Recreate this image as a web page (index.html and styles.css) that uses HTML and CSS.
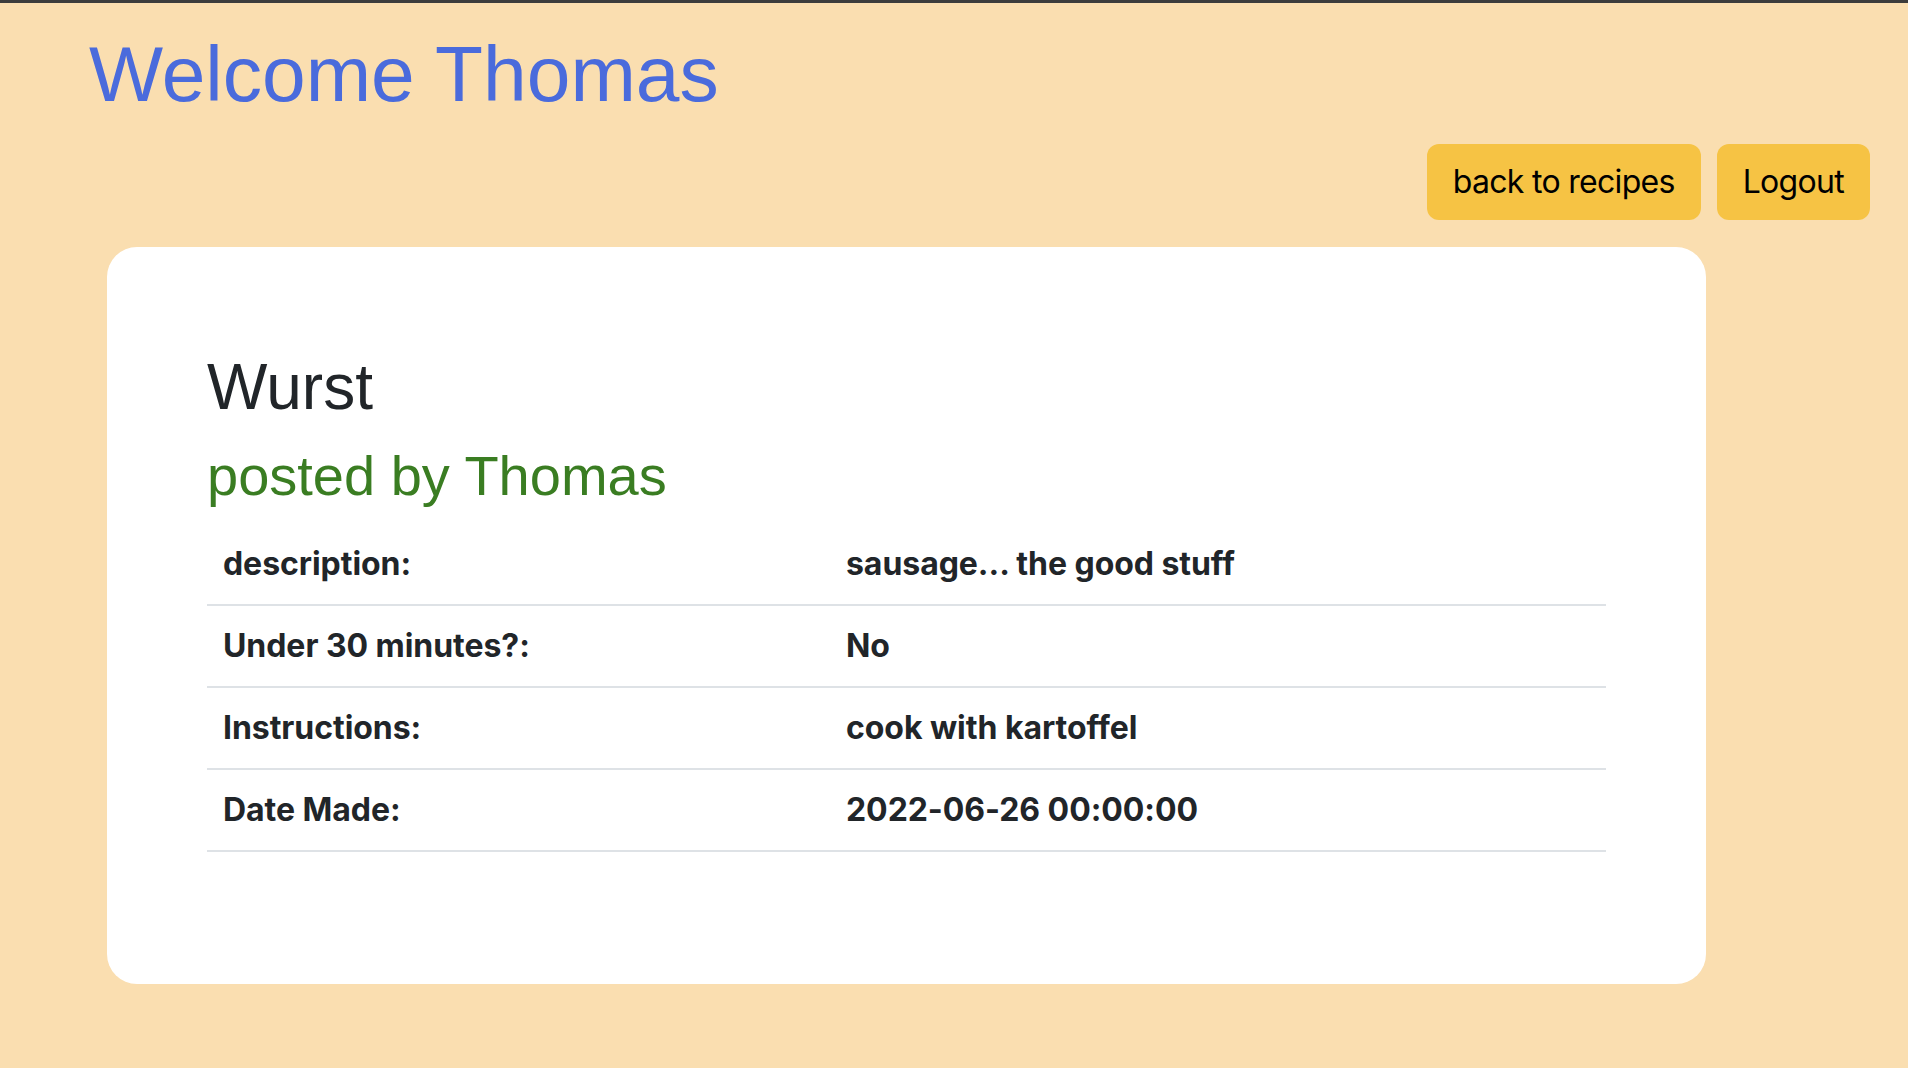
FILE: index.html
```html
<!DOCTYPE html>
<html lang="en">
<head>
<meta charset="utf-8">
<title>Wurst</title>
<link rel="stylesheet" href="styles.css">
</head>
<body>
<div class="topbar"></div>
<header class="header">
  <h1 class="welcome">Welcome Thomas</h1>
  <nav class="actions">
    <a class="btn" href="#">back to recipes</a>
    <a class="btn" href="#">Logout</a>
  </nav>
</header>
<main class="card">
  <h2 class="recipe-name">Wurst</h2>
  <h3 class="posted-by">posted by Thomas</h3>
  <table class="details">
    <tbody>
      <tr><th class="label">description:</th><td class="value">sausage... the good stuff</td></tr>
      <tr><th class="label">Under 30 minutes?:</th><td class="value">No</td></tr>
      <tr><th class="label">Instructions:</th><td class="value">cook with kartoffel</td></tr>
      <tr><th class="label">Date Made:</th><td class="value">2022-06-26 00:00:00</td></tr>
    </tbody>
  </table>
</main>
</body>
</html>
```
FILE: styles.css
```css
html, body {
  margin: 0;
  padding: 0;
}
body {
  background: #fadeb0;
  color: #212529;
  font-family: Inter, "Noto Sans", sans-serif;
  font-size: 32px;
  line-height: 1.5;
  min-height: 1068px;
}
.topbar {
  height: 3px;
  background: #3c3c3c;
}
.header {
  display: flex;
  flex-direction: column;
}
.welcome {
  margin: 24px 0 0 89px;
  font-family: "Liberation Sans", Arial, sans-serif;
  font-weight: 400;
  font-size: 78.5px;
  line-height: 1.2;
  color: #4a6bdc;
}
.actions {
  display: flex;
  justify-content: flex-end;
  gap: 16px;
  margin: 23px 38px 0 0;
}
.btn {
  display: inline-block;
  padding: 12px 24px;
  border: 2px solid transparent;
  border-radius: 12px;
  background: #f6c344;
  color: #000;
  text-decoration: none;
  font-size: 32px;
  line-height: 48px;
  letter-spacing: -0.7px;
}
.card {
  display: block;
  margin: 27px 202px 0 107px;
  padding: 102px 100px 100px;
  background: #fff;
  border-radius: 30px;
}
.recipe-name {
  margin: 0 0 16px;
  font-family: "Liberation Sans", Arial, sans-serif;
  font-weight: 400;
  font-size: 64px;
  line-height: 1.2;
  color: #212529;
}
.posted-by {
  margin: 0 0 15px;
  font-family: "Liberation Sans", Arial, sans-serif;
  font-weight: 400;
  font-size: 56px;
  line-height: 1.2;
  color: #3a7d22;
}
.details {
  width: 100%;
  border-collapse: collapse;
  margin-bottom: 32px;
}
.details th,
.details td {
  padding: 16px 16px;
  border-bottom: 2px solid #dee2e6;
  text-align: left;
  font-weight: 700;
  font-size: 32px;
  line-height: 48px;
  letter-spacing: -0.05px;
  vertical-align: top;
}
.details .label {
  width: 591px;
}
```
